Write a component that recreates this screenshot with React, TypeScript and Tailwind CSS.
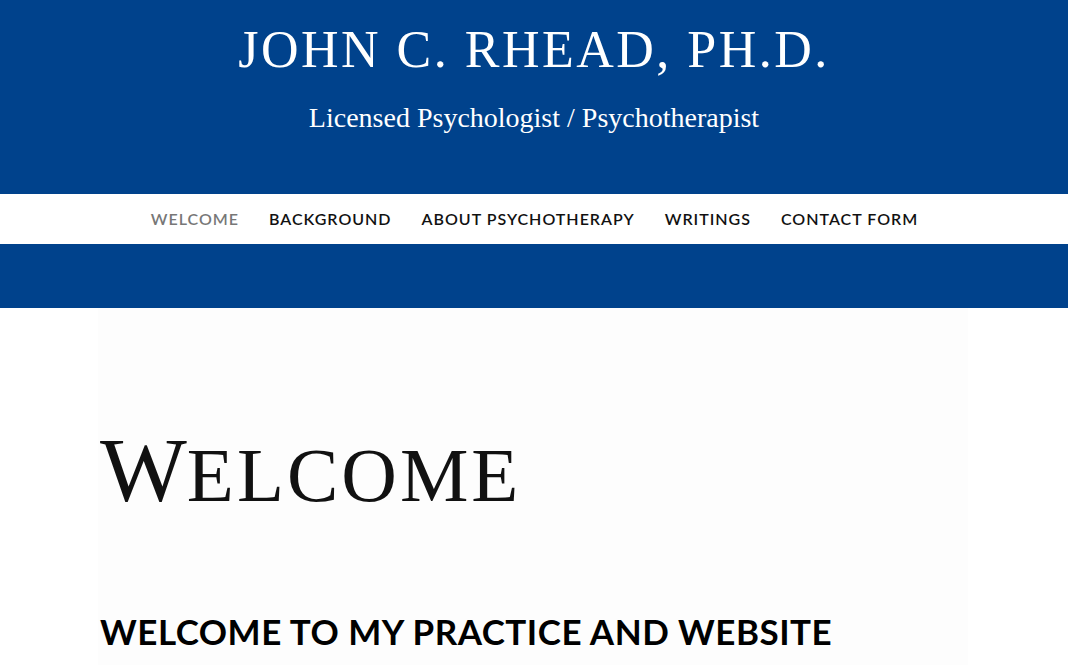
const navItems = ["Welcome", "Background", "About Psychotherapy", "Writings", "Contact Form"];

export default function App() {
  return (
    <div className="min-h-screen bg-white">
      {/* Header */}
      <header className="bg-[#00428c] h-[194px] flex flex-col items-center text-white">
        <h1 className="mt-[20px] text-[52px] leading-[60px] tracking-[2.5px] font-['Liberation_Serif',serif] font-normal">
          JOHN C. RHEAD, PH.D.
        </h1>
        <p className="mt-[20px] text-[28px] leading-[36px] font-['Liberation_Serif',serif]">
          Licensed Psychologist / Psychotherapist
        </p>
      </header>

      {/* Nav */}
      <nav className="h-[50px] bg-white flex items-center justify-center gap-[30px] font-['Lato',sans-serif] text-[16px] tracking-[1px] uppercase font-semibold pl-[1px]">
        {navItems.map((item, i) => (
          <a key={item} className={i === 0 ? "text-[#777777]" : "text-[#111111]"}>
            {item}
          </a>
        ))}
      </nav>

      <div className="bg-[#00428c] h-[64px]" />

      {/* Content */}
      <main className="mx-[98px] w-[870px] bg-[#fdfdfd] h-[400px] px-[2px] pt-[116px]">
        <h2 className="font-['Liberation_Serif',serif] text-[#111] leading-none font-normal">
          <span className="text-[92px]">W</span>
          <span className="text-[77px] tracking-[3px]">ELCOME</span>
        </h2>
        <h3 className="mt-[93px] font-['Lato',sans-serif] font-bold text-[35px] leading-[44px] tracking-[0.5px] text-black">
          WELCOME TO MY PRACTICE AND WEBSITE
        </h3>
      </main>
    </div>
  );
}
